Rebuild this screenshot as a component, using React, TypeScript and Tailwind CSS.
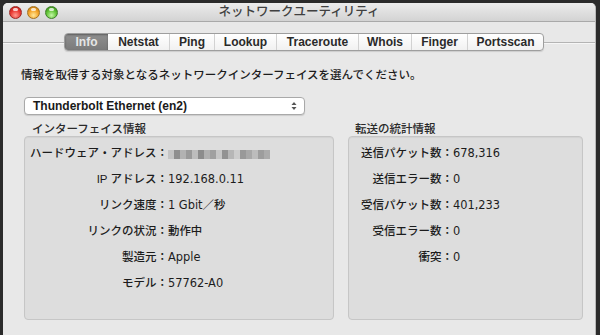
const FONT = "font-['Liberation_Sans','Noto_Sans_CJK_JP',sans-serif]";
const VALUE_FONT = "font-['DejaVu_Sans','Noto_Sans_CJK_JP',sans-serif]";

const TABS = ['Info', 'Netstat', 'Ping', 'Lookup', 'Traceroute', 'Whois', 'Finger', 'Portsscan'];

const TAB_WIDTHS = [
  'w-[43px]',
  'w-[61px]',
  'w-[45px]',
  'w-[62px]',
  'w-[82px]',
  'w-[53px]',
  'w-[56px]',
  'w-[76px]',
];

const INTERFACE_ROWS = [
  { label: 'IP アドレス', value: '192.168.0.11' },
  { label: 'リンク速度', value: '1 Gbit／秒' },
  { label: 'リンクの状況', value: '動作中' },
  { label: '製造元', value: 'Apple' },
  { label: 'モデル', value: '57762-A0' },
];

const STAT_ROWS = [
  { label: '送信パケット数', value: '678,316' },
  { label: '送信エラー数', value: '0' },
  { label: '受信パケット数', value: '401,233' },
  { label: '受信エラー数', value: '0' },
  { label: '衝突', value: '0' },
];

// pixelated (blurred) hardware address
const BLUR_BLOCKS = [
  'bg-[#c4c4c4]',
  'bg-[#8f8f8f]',
  'bg-[#b2b2b2]',
  'bg-[#9a9a9a]',
  'bg-[#bdbdbd]',
  'bg-[#8c8c8c]',
  'bg-[#b0b0b0]',
  'bg-[#a0a0a0]',
  'bg-[#c6c6c6]',
  'bg-[#929292]',
  'bg-[#b6b6b6]',
  'bg-[#cccccc]',
  'bg-[#999999]',
  'bg-[#a8a8a8]',
  'bg-[#bcbcbc]',
  'bg-[#9d9d9d]',
  'bg-[#ababab]',
];

const TrafficLight = ({ color }: { color: 'red' | 'yellow' | 'green' }) => {
  const styles = {
    red: 'bg-[radial-gradient(circle_at_50%_75%,#ff9a8f_0%,#ea3a33_50%,#b3140f_100%)] border-[#9c2a26]',
    yellow: 'bg-[radial-gradient(circle_at_50%_75%,#ffe79a_0%,#f4a52a_50%,#b76f08_100%)] border-[#a4711f]',
    green: 'bg-[radial-gradient(circle_at_50%_75%,#c4f7a6_0%,#62c437_50%,#2f7d12_100%)] border-[#3e7f28]',
  };

  return (
    <div className={`relative w-[13px] h-[13px] rounded-full border ${styles[color]}`}>
      <div className="absolute left-[3px] top-[1px] w-[5px] h-[3px] rounded-full bg-white/75" />
    </div>
  );
};

const InfoRow = ({
  label,
  value,
  labelWidth,
  children,
}: {
  label: string;
  value?: string;
  labelWidth: string;
  children?: React.ReactNode;
}) => (
  <div className="flex items-center h-[25.9px]">
    <span className={`${labelWidth} text-right shrink-0`}>{label}：</span>
    {children ?? <span className={`${VALUE_FONT} text-[11.4px]`}>{value}</span>}
  </div>
);

const App = () => {
  return (
    <div className={`w-[600px] h-[335px] bg-[#2b2b2b] overflow-hidden pl-[3px] pt-[3px] ${FONT}`}>
      <div className="w-[593px] h-[332px] flex flex-col bg-[#e8e8e8] rounded-t-[5px] border-r border-[#b8b8b8] overflow-hidden">
        {/* Title bar */}
        <div className="relative h-[19px] shrink-0 flex items-center bg-[linear-gradient(#ececec,#d3d3d3)] border-b border-[#a9a9a9]">
          <div className="flex items-center gap-[5px] pl-[6px] pt-px">
            <TrafficLight color="red" />
            <TrafficLight color="yellow" />
            <TrafficLight color="green" />
          </div>
          <span className="absolute inset-x-0 top-0 h-[19px] leading-[19px] text-center text-[12.5px] font-medium text-[#404040]">
            ネットワークユーティリティ
          </span>
        </div>

        {/* Tabs */}
        <div className="flex items-center mt-[11px] h-[18px]">
          <div className="w-[61px] h-px bg-[#b4b4b4] shadow-[0_1px_0_#f6f6f6]" />
          <div className="flex h-[18px] rounded-[4px] border border-[#9e9e9e] bg-[linear-gradient(#ffffff,#f1f1f1)] shadow-[0_1px_1px_rgba(0,0,0,0.12)] overflow-hidden">
            {TABS.map((tab, index) => (
              <div
                key={tab}
                className={`${TAB_WIDTHS[index]} h-full flex items-center justify-center text-[12px] font-bold ${
                  index === 0
                    ? 'bg-[linear-gradient(#8f8f8f,#7b7b7b)] text-[#e6e6e6] shadow-[inset_0_1px_2px_rgba(0,0,0,0.35)]'
                    : 'text-[#2a2a2a]'
                } ${index > 1 ? 'border-l border-[#d2d2d2]' : ''}`}
              >
                {tab}
              </div>
            ))}
          </div>
          <div className="flex-1 h-px bg-[#b4b4b4] shadow-[0_1px_0_#f6f6f6]" />
        </div>

        {/* Content */}
        <div className="pl-[18px] pr-[8px] text-[11.5px] font-medium text-[#1c1c1c]">
          <p className="mt-[17px] leading-[14px]">
            情報を取得する対象となるネットワークインターフェイスを選んでください。
          </p>

          <div className="mt-[15px] ml-[3px] w-[281px] h-[18px] flex items-center justify-between pl-[8px] pr-[7px] bg-white border border-[#a9a9a9] rounded-[4px] shadow-[0_1px_1px_rgba(0,0,0,0.12)]">
            <span className="text-[12px] font-bold text-[#1a1a1a]">Thunderbolt Ethernet (en2)</span>
            <svg width="6" height="10" viewBox="0 0 6 10">
              <path d="M0.5 4 L3 1 L5.5 4 Z" fill="#555" />
              <path d="M0.5 6 L3 9 L5.5 6 Z" fill="#555" />
            </svg>
          </div>

          <div className="flex gap-[14px] ml-[3px] mt-px">
            {/* Interface info */}
            <div className="flex flex-col w-[310px] shrink-0">
              <span className="pl-[8px] h-[20px] leading-[14px] pt-[6px] text-[#2a2a2a]">
                インターフェイス情報
              </span>
              <div className="h-[184px] bg-[#dddddd] border border-[#c6c6c6] rounded-[4px] pt-[4px] shadow-[inset_0_1px_1px_rgba(0,0,0,0.05)]">
                <InfoRow label="ハードウェア・アドレス" labelWidth="w-[143px]">
                  <div className="flex h-[9px] mt-px">
                    {BLUR_BLOCKS.map((bg, index) => (
                      <div key={index} className={`w-[6px] h-full ${bg}`} />
                    ))}
                  </div>
                </InfoRow>
                {INTERFACE_ROWS.map((row) => (
                  <InfoRow key={row.label} label={row.label} value={row.value} labelWidth="w-[143px]" />
                ))}
              </div>
            </div>

            {/* Transfer stats */}
            <div className="flex flex-col w-[235px] shrink-0">
              <span className="pl-[7px] h-[20px] leading-[14px] pt-[6px] text-[#2a2a2a]">
                転送の統計情報
              </span>
              <div className="h-[184px] bg-[#dddddd] border border-[#c6c6c6] rounded-[4px] pt-[4px] shadow-[inset_0_1px_1px_rgba(0,0,0,0.05)]">
                {STAT_ROWS.map((row) => (
                  <InfoRow key={row.label} label={row.label} value={row.value} labelWidth="w-[104px]" />
                ))}
              </div>
            </div>
          </div>
        </div>
      </div>
    </div>
  );
};

export default App;
